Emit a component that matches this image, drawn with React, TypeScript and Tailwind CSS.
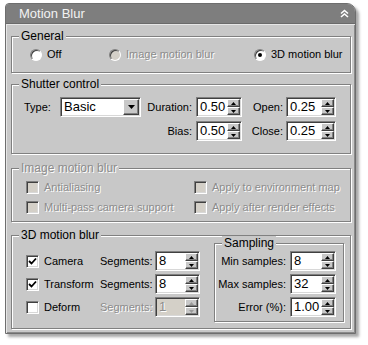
import { ReactNode } from "react"

const sunken = "border border-t-[#808080] border-l-[#808080] border-r-white border-b-white shadow-[inset_1px_1px_0_#404040,inset_-1px_-1px_0_#d8d8d8]"
const raised = "border border-t-white border-l-white border-r-[#404040] border-b-[#404040] shadow-[inset_-1px_-1px_0_#808080] bg-[#c8c8c8]"
const dim = "text-[#8c8c8c] [text-shadow:1px_1px_0_#ffffff]"

function Group({ label, className, disabled, children }: { label: string; className?: string; disabled?: boolean; children?: ReactNode }) {
  return (
    <div className={"relative border border-[#808080] shadow-[1px_1px_0_#ffffff,inset_1px_1px_0_#ffffff] " + (className ?? "")}>
      <span className={"absolute left-[7px] -top-[8px] px-[2px] bg-[#c8c8c8] leading-[14px] text-[12px] " + (disabled ? dim : "")}>{label}</span>
      {children}
    </div>
  )
}

function Radio({ label, checked, disabled, className }: { label: string; checked?: boolean; disabled?: boolean; className?: string }) {
  return (
    <div className={"flex items-center gap-[5px] whitespace-nowrap " + (className ?? "")}>
      <span className={"w-[12px] h-[12px] rounded-full flex items-center justify-center border border-t-[#808080] border-l-[#808080] border-r-white border-b-white shadow-[inset_1px_1px_0_#404040] " + (disabled ? "bg-[#d4d0c8]" : "bg-white")}>
        {checked && <span className="w-[4px] h-[4px] rounded-full bg-black" />}
      </span>
      <span className={disabled ? dim : ""}>{label}</span>
    </div>
  )
}

function Check({ label, checked, disabled, className }: { label: string; checked?: boolean; disabled?: boolean; className?: string }) {
  return (
    <div className={"flex items-center gap-[5px] whitespace-nowrap " + (className ?? "")}>
      <span className={"w-[13px] h-[13px] shrink-0 flex items-center justify-center " + sunken + " " + (disabled ? "bg-[#d4d0c8]" : "bg-white")}>
        {checked && (
          <svg width="9" height="9" viewBox="0 0 9 9">
            <path d="M1 4 L3.5 6.5 L8 1.5" stroke="#000" strokeWidth="1.8" fill="none" />
          </svg>
        )}
      </span>
      <span className={disabled ? dim : ""}>{label}</span>
    </div>
  )
}

function Spin({ value, w, disabled }: { value: string; w: string; disabled?: boolean }) {
  const arrow = disabled ? "#9a9a9a" : "#000"
  return (
    <div className={"flex shrink-0 h-[20px] " + w + " " + sunken + " " + (disabled ? "bg-[#d4d0c8]" : "bg-white")}>
      <span className={"flex-1 pl-[3px] text-[13px] leading-[18px] " + (disabled ? dim : "")}>{value}</span>
      <div className="flex flex-col w-[14px] py-[1px] pr-[1px]">
        <span className={"flex-1 flex items-center justify-center " + raised}>
          <svg width="5" height="3" viewBox="0 0 5 3"><path d="M0 3 L2.5 0 L5 3 Z" fill={arrow} /></svg>
        </span>
        <span className={"flex-1 flex items-center justify-center " + raised}>
          <svg width="5" height="3" viewBox="0 0 5 3"><path d="M0 0 L2.5 3 L5 0 Z" fill={arrow} /></svg>
        </span>
      </div>
    </div>
  )
}

export default function App() {
  return (
    <div className="w-[368px] h-[345px] bg-white font-['Liberation_Sans',sans-serif] text-[11px] text-black pl-[5px] pt-[3px]">
      <div className="w-[351px] h-[331px] flex flex-col rounded-tl-[4px] rounded-tr-[9px] border border-[#6e6e6e] bg-[#c8c8c8] shadow-[3px_3px_3px_rgba(0,0,0,0.35)] overflow-hidden">
        <div className="h-[20px] shrink-0 bg-[#7e7e7e] flex items-center justify-between pl-[13px] pr-[6px] border-b border-[#6a6a6a]">
          <span className="text-[13px] text-[#f2f2f2] leading-none">Motion Blur</span>
          <svg width="9" height="9" viewBox="0 0 9 9">
            <path d="M1 4.5 L4.5 1.5 L8 4.5 M1 8 L4.5 5 L8 8" stroke="#ffffff" strokeWidth="1.6" fill="none" />
          </svg>
        </div>
        <div className="flex-1 flex flex-col pl-[5px] pr-[4px] shadow-[inset_1px_1px_0_#e6e6e6,inset_-1px_-1px_0_#8a8a8a]">
          <Group label="General" className="mt-[12px] h-[37px] flex items-center pl-[18px]">
            <Radio label="Off" className="w-[79px]" />
            <Radio label="Image motion blur" disabled className="w-[145px]" />
            <Radio label="3D motion blur" checked />
          </Group>

          <Group label="Shutter control" className="mt-[11px] h-[70px] flex flex-col gap-[4px] pt-[12px] pl-[12px]">
            <div className="flex items-center h-[20px] whitespace-nowrap">
              <span className="w-[36px]">Type:</span>
              <div className={"w-[81px] h-[20px] shrink-0 flex items-center bg-white " + sunken}>
                <span className="flex-1 pl-[3px] text-[13px]">Basic</span>
                <span className={"w-[16px] h-[16px] mr-[1px] flex items-center justify-center " + raised}>
                  <svg width="7" height="4" viewBox="0 0 7 4"><path d="M0 0 L3.5 4 L7 0 Z" fill="#000" /></svg>
                </span>
              </div>
              <span className="w-[55px] text-right pr-[4px]">Duration:</span>
              <Spin value="0.50" w="w-[46px]" />
              <span className="w-[44px] text-right pr-[3px]">Open:</span>
              <Spin value="0.25" w="w-[50px]" />
            </div>
            <div className="flex items-center h-[20px] whitespace-nowrap">
              <span className="w-[117px]" />
              <span className="w-[55px] text-right pr-[4px]">Bias:</span>
              <Spin value="0.50" w="w-[46px]" />
              <span className="w-[44px] text-right pr-[3px]">Close:</span>
              <Spin value="0.25" w="w-[50px]" />
            </div>
          </Group>

          <Group label="Image motion blur" disabled className="mt-[14px] h-[54px] grid grid-cols-[168px_1fr] grid-rows-[16px_16px] gap-y-[4px] pt-[10px] pl-[14px]">
            <Check label="Antialiasing" disabled />
            <Check label="Apply to environment map" disabled />
            <Check label="Multi-pass camera support" disabled />
            <Check label="Apply after render effects" disabled />
          </Group>

          <Group label="3D motion blur" className="mt-[13px] h-[94px] flex items-start pl-[14px]">
            <div className="flex flex-col gap-[3px] pt-[15px]">
              {[
                { name: "Camera", on: true, v: "8" },
                { name: "Transform", on: true, v: "8" },
                { name: "Deform", on: false, v: "1" },
              ].map((r) => (
                <div key={r.name} className="flex items-center h-[20px] whitespace-nowrap">
                  <Check label={r.name} checked={r.on} className="w-[74px]" />
                  <span className={"w-[55px] " + (r.on ? "" : dim)}>Segments:</span>
                  <Spin value={r.v} w="w-[45px]" disabled={!r.on} />
                </div>
              ))}
            </div>
            <Group label="Sampling" className="ml-[14px] mt-[7px] w-[130px] h-[79px] flex flex-col gap-[3px] pt-[7px]">
              {[
                { name: "Min samples:", v: "8" },
                { name: "Max samples:", v: "32" },
                { name: "Error (%):", v: "1.00" },
              ].map((r) => (
                <div key={r.name} className="flex items-center h-[20px] whitespace-nowrap">
                  <span className="w-[75px] text-right pr-[4px]">{r.name}</span>
                  <Spin value={r.v} w="w-[46px]" />
                </div>
              ))}
            </Group>
          </Group>
        </div>
      </div>
    </div>
  )
}
